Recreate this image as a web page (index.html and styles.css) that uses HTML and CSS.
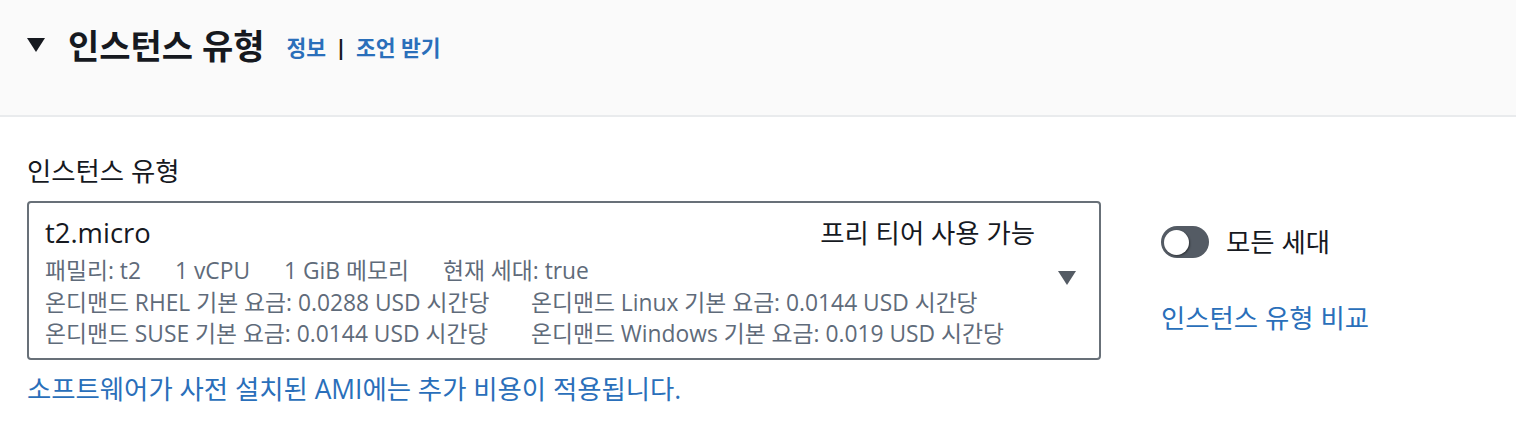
FILE: index.html
```html
<!DOCTYPE html>
<html lang="ko">
<head>
<meta charset="utf-8">
<title>인스턴스 유형</title>
<link rel="stylesheet" href="styles.css">
</head>
<body>
<section class="panel">
  <header class="panel-header">
    <span class="caret"></span>
    <h2 class="title">인스턴스 유형</h2>
    <div class="header-links">
      <a class="link strong">정보</a>
      <span class="sep">|</span>
      <a class="link strong">조언 받기</a>
    </div>
  </header>
  <div class="panel-body">
    <div class="field-label">인스턴스 유형</div>
    <div class="field-row">
      <div class="field-main">
        <div class="select">
          <div class="select-content">
            <div class="option-top">
              <span class="option-name">t2.micro</span>
              <span class="option-tag">프리 티어 사용 가능</span>
            </div>
            <div class="option-line">
              <span>패밀리: t2</span>
              <span>1 vCPU</span>
              <span>1 GiB 메모리</span>
              <span>현재 세대: true</span>
            </div>
            <div class="option-line cols">
              <span>온디맨드 RHEL 기본 요금: 0.0288 USD 시간당</span>
              <span>온디맨드 Linux 기본 요금: 0.0144 USD 시간당</span>
            </div>
            <div class="option-line cols">
              <span>온디맨드 SUSE 기본 요금: 0.0144 USD 시간당</span>
              <span>온디맨드 Windows 기본 요금: 0.019 USD 시간당</span>
            </div>
          </div>
          <span class="select-arrow"></span>
        </div>
        <div class="note"><a class="link">소프트웨어가 사전 설치된 AMI에는 추가 비용이 적용됩니다.</a></div>
      </div>
      <div class="field-side">
        <div class="toggle-row">
          <span class="toggle"><span class="knob"></span></span>
          <span class="toggle-label">모든 세대</span>
        </div>
        <a class="link side-link">인스턴스 유형 비교</a>
      </div>
    </div>
  </div>
</section>
</body>
</html>
```

FILE: styles.css
```css
* { box-sizing: border-box; }
html, body { margin: 0; padding: 0; background: #ffffff; }
body {
  font-family: "Open Sans", "Noto Sans CJK KR", sans-serif;
  color: #16191f;
  font-size: 26.4px;
}
.panel-header {
  height: 117px;
  background: #fafafa;
  border-bottom: 2px solid #e9ebed;
  padding: 30px 0 0 27px;
  display: flex;
  align-items: flex-start;
}
.caret {
  width: 0; height: 0;
  margin-top: 8px;
  border-left: 9px solid transparent;
  border-right: 9px solid transparent;
  border-top: 14px solid #16191f;
}
.title {
  margin: 0 0 0 23px;
  font-size: 34px;
  line-height: 32px;
  font-weight: 700;
}
.header-links {
  margin-left: 22px;
  display: flex;
  align-items: center;
  gap: 9px;
  height: 32px;
  font-size: 21.5px;
  font-weight: 700;
}
.sep { color: #16191f; font-weight: 700; }
.link { color: #2a6fba; text-decoration: none; }
.strong { font-weight: 700; }
.panel-body {
  padding: 39px 27px 0 27px;
}
.field-label {
  line-height: 30px;
  font-size: 26.4px;
}
.field-row {
  display: flex;
  align-items: flex-start;
  gap: 60px;
  margin-top: 15px;
}
.field-main { width: 1074px; }
.select {
  height: 159px;
  border: 2px solid #687078;
  border-radius: 4px;
  display: flex;
  align-items: center;
  padding: 14px 23px 8px 16px;
}
.select-content { flex: 1; align-self: stretch; }
.option-top {
  display: flex;
  justify-content: space-between;
  line-height: 32px;
  height: 38px;
}
.option-name { font-size: 27.4px; }
.option-tag { font-size: 26.4px; }
.option-line {
  display: flex;
  gap: 34px;
  font-size: 22.8px;
  line-height: 31.5px;
  color: #5f6b7a;
  white-space: nowrap;
}
.option-line.cols span:first-child { width: 452px; }
.select-arrow {
  width: 0; height: 0;
  margin-left: 23px;
  margin-top: -12px;
  border-left: 9px solid transparent;
  border-right: 9px solid transparent;
  border-top: 14px solid #545b64;
}
.note {
  margin-top: 14px;
  line-height: 30px;
  font-size: 26.4px;
}
.field-side { padding-top: 25px; }
.toggle-row {
  display: flex;
  align-items: center;
  gap: 17px;
  height: 32px;
}
.toggle {
  width: 48px; height: 32px;
  border-radius: 16px;
  background: #545b64;
  display: flex;
  align-items: center;
  padding-left: 3px;
}
.knob {
  width: 25px; height: 25px;
  border-radius: 50%;
  background: #ffffff;
  box-shadow: 1px 1px 2px rgba(0,0,0,0.45);
}
.toggle-label { font-size: 26.4px; line-height: 32px; }
.side-link {
  display: block;
  margin-top: 45px;
  line-height: 30px;
  font-size: 26.4px;
}
```
